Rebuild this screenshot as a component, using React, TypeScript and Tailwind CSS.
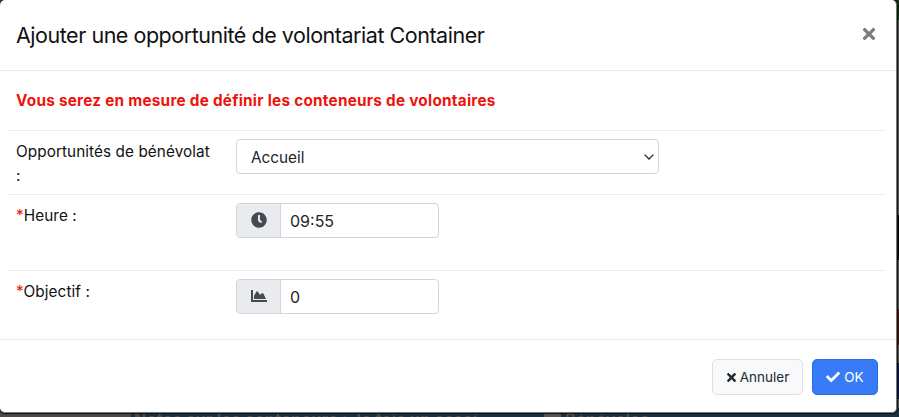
import type { ReactNode } from "react";
import { FaChartArea, FaCheck, FaClock, FaTimes } from "react-icons/fa";

function Backdrop() {
  return (
    <div className="flex h-full flex-col">
      <div className="flex min-h-0 flex-1 flex-col items-end bg-[#4c4c4b]">
        <div className="h-[20px] w-8 bg-[#0c3319]" />
        <div className="h-[195px] w-8 bg-[#5b5c5a]" />
        <div className="h-[45px] w-8 bg-[#090909]" />
        <div className="h-[49px] w-8 bg-[#5b5c5a]" />
        <div className="h-[36px] w-8 bg-[#4b1518]" />
        <div className="h-[18px] w-8 bg-[#5b5c5a]" />
        <div className="h-[36px] w-8 bg-[#0d1559]" />
        <div className="w-8 flex-1 bg-[#5b5c5a]" />
      </div>
      <div className="flex h-[9px] overflow-hidden bg-[#1d303e] text-[16px] font-bold leading-[20px] text-[#504d4c]">
        <div className="h-full w-[131px] shrink-0 bg-[#4c4948]" />
        <div className="mt-px w-[413px] shrink-0 whitespace-nowrap pl-[3px] tracking-[0.36px]">
          Notes sur les conteneurs : Je fais un essai
        </div>
        <div className="h-full w-[17px] shrink-0 bg-[#575453]" />
        <div className="mt-px pl-[4px] tracking-[0.36px]">Bénévoles</div>
      </div>
    </div>
  );
}

function Row({ label, required, className, children }: { label: string; required?: boolean; className: string; children: ReactNode }) {
  return (
    <div className={`flex border-t border-[#ededee] px-2 pt-2 ${className}`}>
      <label className="mt-[0.5px] w-[220px] shrink-0 pr-[20px] text-[15.3px] leading-[24px] tracking-[0.08px] text-[#111]">
        {required && <span className="text-[#e8140c]">*</span>}
        {label}
      </label>
      {children}
    </div>
  );
}

function IconInput({ icon, value }: { icon: ReactNode; value: string }) {
  return (
    <div className="flex h-[35px] w-[203px] overflow-hidden rounded-[4px] border border-[#cfd5db] bg-white">
      <span className="flex w-[44px] items-center justify-center border-r border-[#cfd5db] bg-[#e9ebef] pb-px text-[#444b52]">{icon}</span>
      <span className="pl-[9px] text-[16px] leading-[34px] text-[#212529]">{value}</span>
    </div>
  );
}

export default function App() {
  return (
    <div className="relative h-[417px] w-[899px] overflow-hidden font-['Inter','Liberation_Sans',sans-serif]">
      <Backdrop />
      <div className="absolute left-0 top-0 flex h-[413px] w-[897px] flex-col rounded-[5px] border-b border-r border-b-[#77777a] border-r-[#777777] bg-white shadow-[0_0_1px_1px_#111]">
        <header className="flex h-[71px] shrink-0 items-center justify-between border-b border-[#ebebec] pl-4 pr-[18px]">
          <h1 className="text-[21.5px] tracking-[-0.47px] text-[#111]">Ajouter une opportunité de volontariat Container</h1>
          <FaTimes className="mb-[3px] size-[18px] text-[#7c7c7c]" />
        </header>
        <main className="h-[268px] shrink-0 pl-2 pr-[10px]">
          <p className="h-[59px] px-2 pt-[18px] text-[15.3px] font-bold leading-[24px] tracking-[0.26px] text-[#ee130c]">
            Vous serez en mesure de définir les conteneurs de volontaires
          </p>
          <Row label="Opportunités de bénévolat :" className="h-[64px]">
            <div className="flex h-[35px] w-[423px] items-center justify-between rounded-[4px] border border-[#cfd5db] pl-[14px] pr-[4px] pt-px text-[15.3px] text-[#212529]">
              <span className="pt-[2px]">Accueil</span>
              <svg className="h-[6px] w-[10px]" viewBox="0 0 10 6" fill="none" stroke="#25292d" strokeWidth="1.3">
                <path d="m.6.6 4.4 4.4L9.4.6" />
              </svg>
            </div>
          </Row>
          <Row label="Heure :" required className="h-[76px]">
            <IconInput icon={<FaClock className="size-[16px]" />} value="09:55" />
          </Row>
          <Row label="Objectif :" required className="h-[69px]">
            <IconInput icon={<FaChartArea className="size-[16px]" />} value="0" />
          </Row>
        </main>
        <footer className="flex flex-1 justify-end gap-[9px] border-t border-[#ebebec] pr-[18px] pt-[19px]">
          <button className="flex h-[36px] w-[91px] items-center justify-center gap-[2px] rounded-[5px] border border-[#dddfe2] bg-[#f8f9fb] pr-px text-[13.5px] text-[#25282b]">
            <FaTimes className="size-[13px]" />
            Annuler
          </button>
          <button className="flex h-[36px] w-[66px] items-center justify-center gap-[4px] rounded-[5px] border border-[#226dec] bg-[#397bf7] text-[13.5px] text-white">
            <FaCheck className="size-[14px]" />
            OK
          </button>
        </footer>
      </div>
    </div>
  );
}
